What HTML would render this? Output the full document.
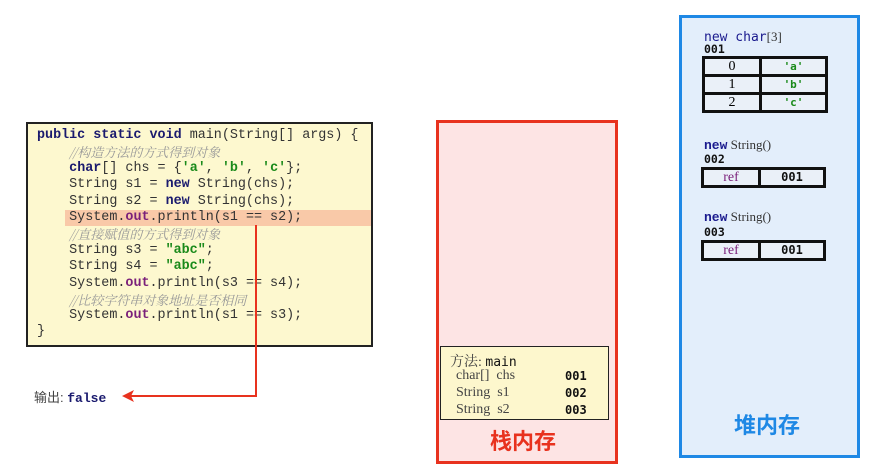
<!DOCTYPE html>
<html><head><meta charset="utf-8"><style>
body{margin:0;width:878px;height:463px;background:#fff;position:relative;overflow:hidden;font-family:"Liberation Sans","Noto Sans CJK SC",sans-serif}
.a{position:absolute}
#code{left:26px;top:122px;width:343px;height:221px;background:#fdf8cf;border:2px solid #222}
.cl{position:absolute;left:9px;font-family:"Liberation Mono","Noto Sans CJK SC",monospace;font-size:13.4px;color:#333;white-space:pre;line-height:16px}
.kw{color:#1a1a6e;font-weight:bold}
.str{color:#1a8a1a;font-weight:bold}
.out{color:#7a1f7a;font-weight:bold}
.cm{color:#999;font-style:italic;font-family:"Noto Serif CJK SC","Liberation Mono",serif;font-size:13px}
#hl{left:37px;top:86px;width:306px;height:16px;background:#f9c9a8}
#stack{left:436px;top:120px;width:176px;height:338px;background:#fde4e4;border:3px solid #e8321e}
#frame{left:440px;top:346px;width:167px;height:72px;background:#fdf7cd;border:1.5px solid #222}
.fm{font-family:"Liberation Serif","Noto Serif CJK SC",serif;font-size:14px;color:#444;white-space:pre}
.mono{font-family:"DejaVu Sans Mono",monospace;font-weight:bold;font-size:12px;color:#111}
#heap{left:679px;top:15px;width:175px;height:437px;background:#e3eefb;border:3px solid #1e88e5}
table{border-collapse:collapse;position:absolute}
td{border:3.5px solid #111;background:#eaf0f8;text-align:center;padding:0;height:15px;line-height:15px;font-size:14px;font-family:"Liberation Serif",serif}
.big{font-weight:bold;font-size:22px;font-family:"Noto Sans CJK SC",sans-serif}
</style></head><body>
<div id="code" class="a">
<div id="hl" class="a"></div>
<div class="cl" style="top:4px"><span class="kw">public static void</span> main(String[] args) {</div>
<div class="cl" style="top:20px">    <span class="cm">//构造方法的方式得到对象</span></div>
<div class="cl" style="top:37px">    <span class="kw">char</span>[] chs = {<span class="str">'a'</span>, <span class="str">'b'</span>, <span class="str">'c'</span>};</div>
<div class="cl" style="top:53px">    String s1 = <span class="kw">new</span> String(chs);</div>
<div class="cl" style="top:70px">    String s2 = <span class="kw">new</span> String(chs);</div>
<div class="cl" style="top:86px">    System.<span class="out">out</span>.println(s1 == s2);</div>
<div class="cl" style="top:102px">    <span class="cm">//直接赋值的方式得到对象</span></div>
<div class="cl" style="top:119px">    String s3 = <span class="str">"abc"</span>;</div>
<div class="cl" style="top:135px">    String s4 = <span class="str">"abc"</span>;</div>
<div class="cl" style="top:152px">    System.<span class="out">out</span>.println(s3 == s4);</div>
<div class="cl" style="top:168px">    <span class="cm">//比较字符串对象地址是否相同</span></div>
<div class="cl" style="top:184px">    System.<span class="out">out</span>.println(s1 == s3);</div>
<div class="cl" style="top:200px">}</div>
</div>
<svg class="a" style="left:0;top:0" width="878" height="463">
<polyline points="256,225 256,396 128,396" fill="none" stroke="#e8321e" stroke-width="2"/>
<polygon points="122,396 134,390 131,396 134,402" fill="#e8321e"/>
</svg>
<div class="a" style="left:34px;top:387px;font-size:13px;color:#444">输出: <span style="font-family:'Liberation Mono',monospace;font-weight:bold;color:#1a1a6e">false</span></div>
<div id="stack" class="a"></div>
<div id="frame" class="a">
<div class="a fm" style="left:9px;top:4px">方法: <span style="font-family:'DejaVu Sans Mono',monospace;color:#111;font-size:13px">main</span></div>
<div class="a fm" style="left:15px;top:21px">char[]  chs</div>
<div class="a fm" style="left:15px;top:38px">String  s1</div>
<div class="a fm" style="left:15px;top:55px">String  s2</div>
<div class="a mono" style="left:124px;top:22px">001</div>
<div class="a mono" style="left:124px;top:39px">002</div>
<div class="a mono" style="left:124px;top:56px">003</div>
</div>
<div class="a big" style="left:490px;top:424px;color:#e8321e">栈内存</div>
<div id="heap" class="a"></div>
<div class="a" style="left:704px;top:29px;font-family:'DejaVu Sans Mono',monospace;font-size:13px;color:#1a1a8e">new char<span style="color:#333;font-family:'Liberation Serif',serif">[3]</span></div>
<div class="a mono" style="left:704px;top:42px;font-size:11.5px">001</div>
<table style="left:702px;top:56px;width:126px">
<tr><td style="width:54px">0</td><td class="str" style="font-size:11px;font-family:'DejaVu Sans Mono',monospace">'a'</td></tr>
<tr><td>1</td><td class="str" style="font-size:11px;font-family:'DejaVu Sans Mono',monospace">'b'</td></tr>
<tr><td>2</td><td class="str" style="font-size:11px;font-family:'DejaVu Sans Mono',monospace">'c'</td></tr>
</table>
<div class="a" style="left:704px;top:137px;font-size:13px;color:#333;font-family:'Liberation Serif',serif"><b style="color:#1a1a8e;font-family:'Liberation Mono',monospace">new</b> String()</div>
<div class="a mono" style="left:704px;top:152px;font-size:11.5px">002</div>
<table style="left:701px;top:167px;width:125px">
<tr><td style="width:54px;color:#7a1f7a;height:15px">ref</td><td class="mono">001</td></tr></table>
<div class="a" style="left:704px;top:209px;font-size:13px;color:#333;font-family:'Liberation Serif',serif"><b style="color:#1a1a8e;font-family:'Liberation Mono',monospace">new</b> String()</div>
<div class="a mono" style="left:704px;top:225px;font-size:11.5px">003</div>
<table style="left:701px;top:240px;width:125px">
<tr><td style="width:54px;color:#7a1f7a;height:15px">ref</td><td class="mono">001</td></tr></table>
<div class="a big" style="left:734px;top:408px;color:#1e88e5">堆内存</div>
</body></html>
